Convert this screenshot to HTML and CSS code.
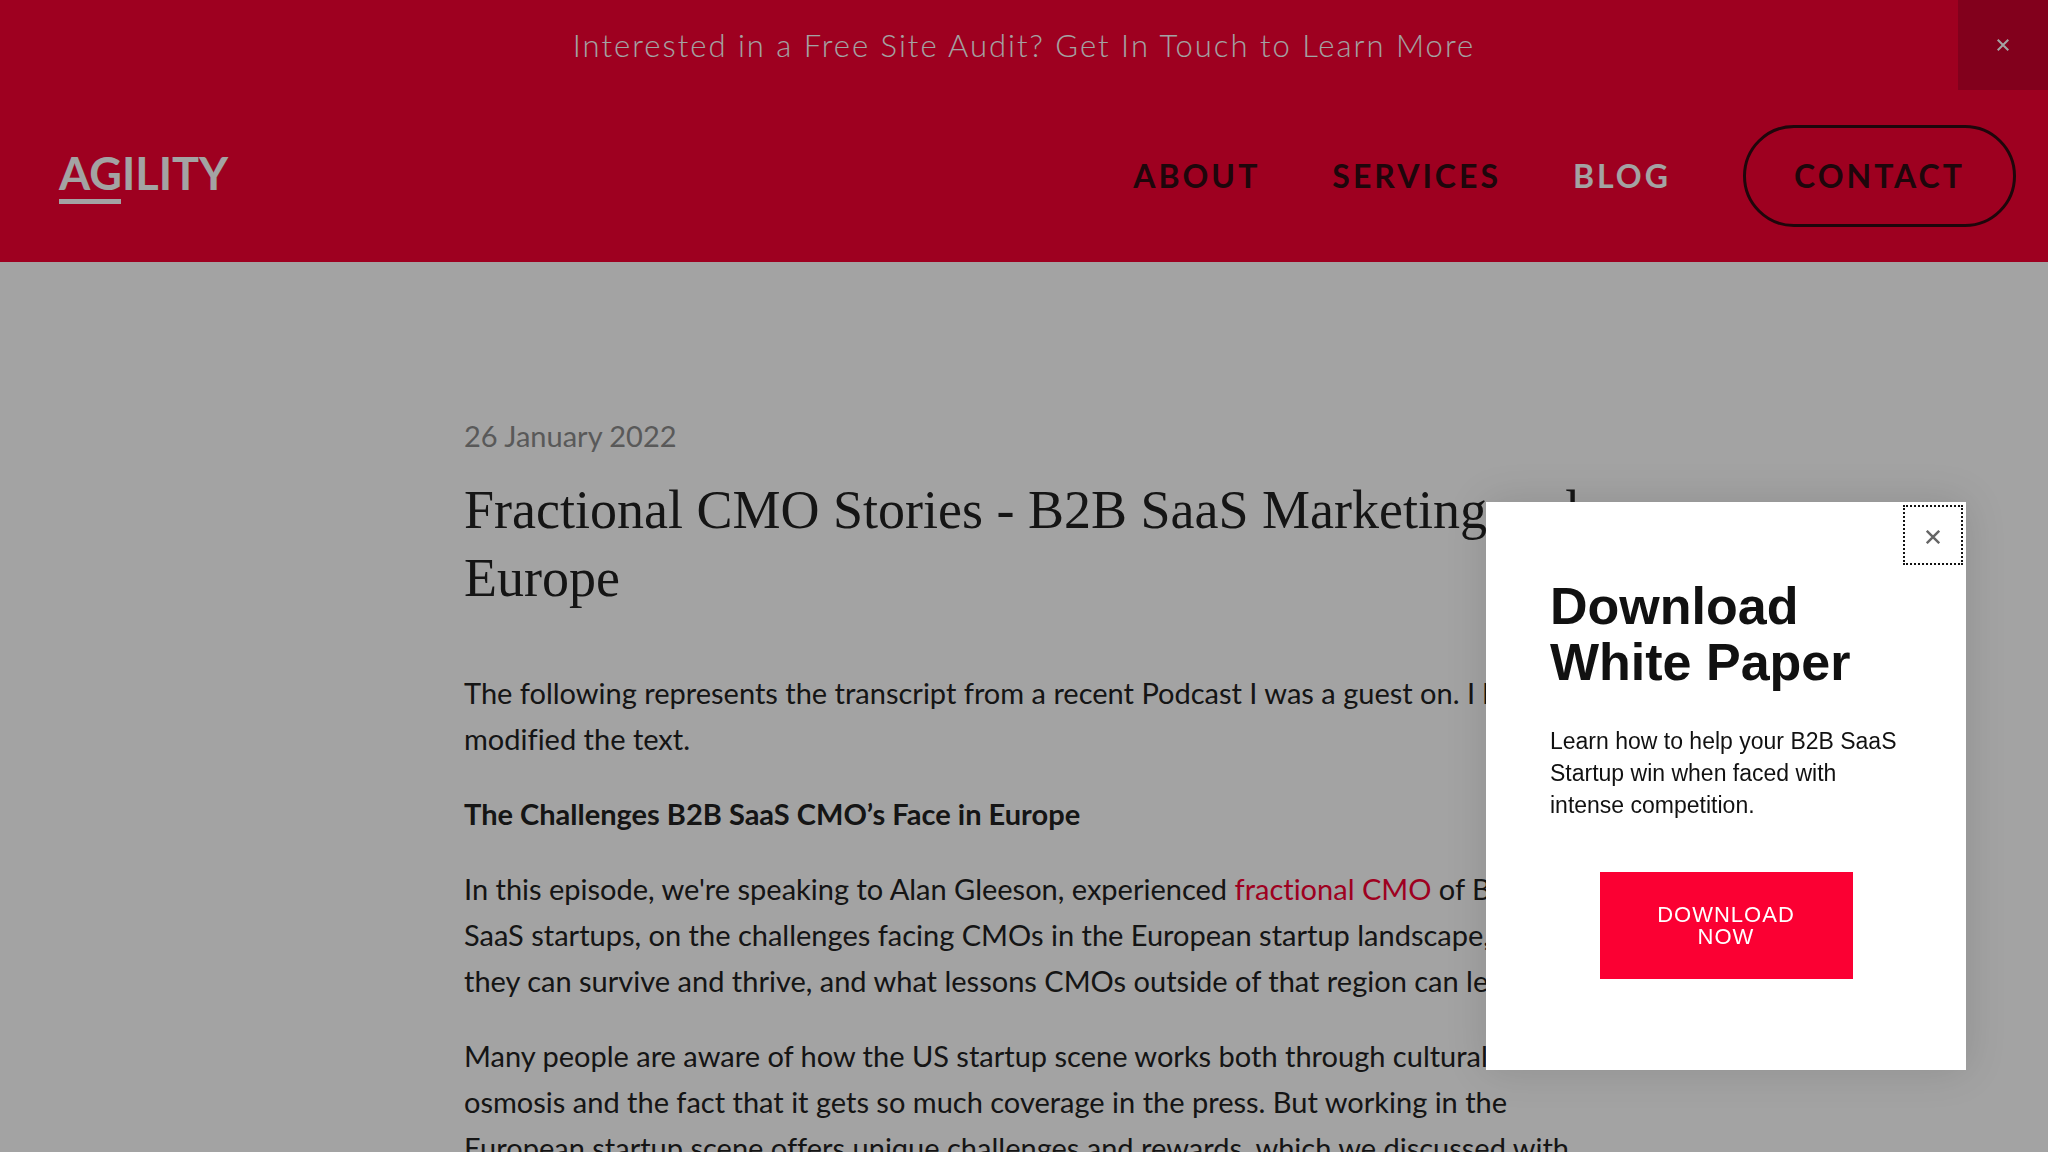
FILE: index.html
```html
<!DOCTYPE html>
<html lang="en">
<head>
<meta charset="utf-8">
<title>Fractional CMO Stories - Agility</title>
<meta name="viewport" content="width=device-width, initial-scale=1">
<link rel="stylesheet" href="styles.css">
</head>
<body>
<div class="announcement">
  <a class="announcement-link" href="#contact">Interested in a Free Site Audit? Get In Touch to Learn More</a>
  <button class="announcement-close" type="button" aria-label="Close announcement">
    <svg width="12" height="12" viewBox="0 0 12 12" fill="none" stroke="currentColor" stroke-width="2"><path d="M.7.7l10.6 10.6M11.3.7.7 11.3"/></svg>
  </button>
</div>
<header class="header">
  <a class="logo" href="#home">AGILITY</a>
  <nav class="nav">
    <a class="nav-link" href="#about">ABOUT</a>
    <a class="nav-link" href="#services">SERVICES</a>
    <a class="nav-link nav-link-active" href="#blog">BLOG</a>
    <a class="nav-button" href="#contact">CONTACT</a>
  </nav>
</header>
<main class="article">
  <time class="date" datetime="2022-01-26">26 January 2022</time>
  <h1 class="title">Fractional CMO Stories - B2B SaaS Marketing and<br>Europe</h1>
  <p>The following represents the transcript from a recent Podcast I was a guest on. I have<br>modified the text.</p>
  <p><strong>The Challenges B2B SaaS CMO’s Face in Europe</strong></p>
  <p>In this episode, we're speaking to Alan Gleeson, experienced <a class="link" href="#cmo">fractional CMO</a> of B2B<br>SaaS startups, on the challenges facing CMOs in the European startup landscape, how<br>they can survive and thrive, and what lessons CMOs outside of that region can learn.</p>
  <p>Many people are aware of how the US startup scene works both through cultural<br>osmosis and the fact that it gets so much coverage in the press. But working in the<br>European startup scene offers unique challenges and rewards, which we discussed with</p>
</main>
<div class="overlay"></div>
<section class="popup" role="dialog" aria-labelledby="popup-title">
  <button class="popup-close" type="button" aria-label="Close">
    <svg width="14" height="14" viewBox="0 0 14 14" fill="none" stroke="currentColor" stroke-width="2.4"><path d="M.8.8l12.4 12.4M13.2.8.8 13.2"/></svg>
  </button>
  <h2 class="popup-title" id="popup-title">Download White Paper</h2>
  <p class="popup-text">Learn how to help your B2B SaaS Startup win when faced with intense competition.</p>
  <button class="download" type="button">DOWNLOAD NOW</button>
</section>
</body>
</html>
```
FILE: styles.css
```css
* { box-sizing: border-box; }

body {
  margin: 0;
  background: #fff;
  color: #222;
  font-family: Lato, "Liberation Sans", sans-serif;
  font-size: 29px;
  line-height: 46px;
  font-variant-ligatures: none;
}

a { color: inherit; text-decoration: none; }
button { font: inherit; border: 0; padding: 0; cursor: pointer; }

.announcement {
  display: grid;
  grid-template-columns: 90px 1fr 90px;
  align-items: center;
  height: 90px;
  background: #f80033;
  color: #fff;
}
.announcement-link {
  grid-column: 2;
  text-align: center;
  font-size: 31px;
  font-weight: 300;
  letter-spacing: 2px;
}
.announcement-close {
  height: 90px;
  display: grid;
  place-items: center;
  background: #cc002c;
  color: #fff;
}

.header {
  display: flex;
  align-items: center;
  justify-content: space-between;
  height: 172px;
  padding: 0 32px 0 59px;
  background: #f80033;
}
.logo {
  padding-top: 2px;
  color: #fff;
  font-size: 45px;
  font-weight: 700;
  line-height: 46px;
}
.logo::after {
  content: "";
  display: block;
  width: 62px;
  height: 5px;
  margin-top: 3px;
  background: currentColor;
}
.nav {
  display: flex;
  align-items: center;
  gap: 72px;
  color: #300a12;
  font-size: 32px;
  font-weight: 700;
  letter-spacing: 3px;
}
.nav-link-active { color: #fff; }
.nav-button {
  padding: 25px 48px;
  border: 3px solid currentColor;
  border-radius: 51px;
}

.article {
  max-width: 1120px;
  margin: 0 auto;
  padding: 151px 0 60px;
  white-space: nowrap;
}
.date { display: block; color: #8c8c8c; }
.title {
  margin: 17px 0 58px;
  font-family: "Liberation Serif", serif;
  font-size: 54px;
  font-weight: 400;
  line-height: 68px;
}
.article p { margin: 0 0 29px; }
.link { color: #f80033; }

.overlay {
  position: fixed;
  inset: 0;
  background: rgba(0, 0, 0, 0.36);
}

.popup {
  position: fixed;
  right: 82px;
  bottom: 82px;
  width: 480px;
  padding: 76px 64px 91px;
  background: #fff;
  color: #111;
  font-family: "Liberation Sans", sans-serif;
  box-shadow: 0 0 40px rgba(0, 0, 0, 0.12);
}
.popup-close {
  position: absolute;
  top: 4px;
  right: 4px;
  width: 58px;
  height: 58px;
  display: grid;
  place-items: center;
  padding-top: 3px;
  background: none;
  color: #666;
  outline: 2px dotted #111;
  outline-offset: -1px;
}
.popup-title {
  margin: 0 0 35px;
  font-size: 52px;
  font-weight: 700;
  line-height: 56px;
}
.popup-text {
  margin: 0 0 51px;
  font-size: 23px;
  line-height: 32px;
}
.download {
  display: block;
  width: 253px;
  margin: 0 auto;
  padding: 32px 50px 31px;
  background: #fb0033;
  color: #fff;
  font-size: 22px;
  line-height: 22px;
  letter-spacing: 1px;
}
```
